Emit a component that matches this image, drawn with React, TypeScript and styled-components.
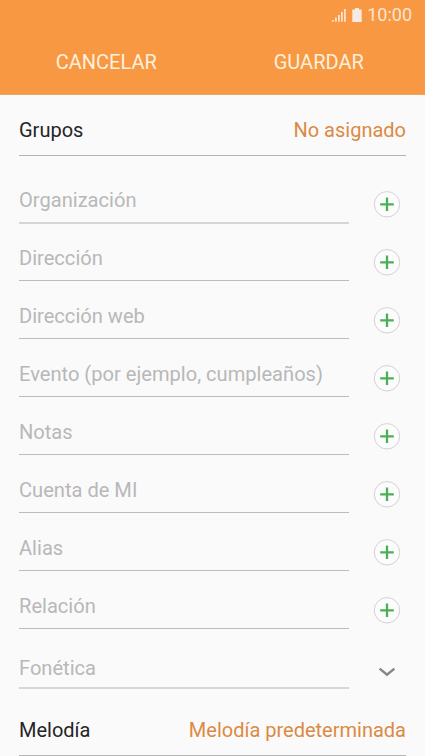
import React from "react";
import styled, { createGlobalStyle } from "styled-components";

const FIELDS = [
  { label: "Organización", soft: true },
  { label: "Dirección" },
  { label: "Dirección web" },
  { label: "Evento (por ejemplo, cumpleaños)" },
  { label: "Notas" },
  { label: "Cuenta de MI" },
  { label: "Alias" },
  { label: "Relación" },
];

const SignalIcon = () => (
  <svg width="15" height="14" viewBox="0 0 15 14" fill="#fbe3cc">
    <rect x="0" y="12" width="1.8" height="1.700" />
    <rect x="3" y="9.6" width="1.8" height="4.100" />
    <rect x="6" y="7" width="1.8" height="6.700" />
    <rect x="9" y="4" width="1.8" height="9.700" />
    <rect x="12" y="1" width="1.8" height="12.700" />
  </svg>
);

const BatteryIcon = () => (
  <svg width="10" height="14" viewBox="0 0 10 14" fill="#f6eae2">
    <path d="M3 0h4v1.6h2.2q.5 0 .5.5v11.4q0 .5-.5.5H.8q-.5 0-.5-.5V2.100q0-.5.5-.5H3z" />
  </svg>
);

const PlusIcon = () => (
  <svg width="28" height="28" viewBox="0 0.700 28 28" fill="none">
    <circle cx="14" cy="14" r="12.7" fill="#fcfcfc" stroke="#d2d2d2" />
    <path d="M14 7.200v13.600M7.200 14h13.600" stroke="#4caf57" strokeWidth="2.3" />
  </svg>
);

const ChevronIcon = () => (
  <svg width="28" height="28" viewBox="0 0 28 28" fill="none">
    <path d="M6.600 10.600l7.400 6 7.400-6" stroke="#858585" strokeWidth="2.4" />
  </svg>
);

export default function App() {
  return (
    <>
      <GlobalStyle />
      <Screen>
        <Header>
          <StatusBar>
            <SignalIcon />
            <BatteryIcon />
            <Clock>10:00</Clock>
          </StatusBar>
          <Actions>
            <ActionButton>CANCELAR</ActionButton>
            <ActionButton>GUARDAR</ActionButton>
          </Actions>
        </Header>
        <SettingRow $height={61}>
          <span>Grupos</span>
          <SettingValue>No asignado</SettingValue>
        </SettingRow>
        <FieldList>
          {FIELDS.map((item) => (
            <FieldRow key={item.label}>
              <Field $soft={item.soft}>{item.label}</Field>
              <IconButton aria-label="Añadir">
                <PlusIcon />
              </IconButton>
            </FieldRow>
          ))}
          <FieldRow $last>
            <Field $soft $last>
              Fonética
            </Field>
            <IconButton $last aria-label="Expandir">
              <ChevronIcon />
            </IconButton>
          </FieldRow>
        </FieldList>
        <SettingRow $height={67}>
          <span>Melodía</span>
          <SettingValue>Melodía predeterminada</SettingValue>
        </SettingRow>
      </Screen>
    </>
  );
}

const GlobalStyle = createGlobalStyle`
  * {
    box-sizing: border-box;
  }
  body {
    margin: 0;
    background: #fafafa;
    font-family: Roboto, sans-serif;
  }
  button {
    border: 0;
    padding: 0;
    background: none;
    font: inherit;
    cursor: pointer;
  }
  svg {
    display: block;
  }
`;

const Screen = styled.div`
  width: 425px;
  height: 756px;
  overflow: hidden;
  background: #fafafa;
  font-size: 20px;
  line-height: 24px;
`;

const Header = styled.header`
  height: 95px;
  background: #f89843;
  border-bottom: 1px solid #e3a76f;
`;

const StatusBar = styled.div`
  display: flex;
  align-items: center;
  justify-content: flex-end;
  gap: 5px;
  height: 29px;
  padding-right: 13px;
`;

const Clock = styled.span`
  color: #fbe5d2;
  font-size: 18px;
  line-height: 20px;
  padding-top: 1px;
`;

const Actions = styled.div`
  display: flex;
  height: 65px;
`;

const ActionButton = styled.button`
  flex: 1;
  height: 65px;
  color: #fdf0dc;
`;

const SettingRow = styled.div<{ $height: number }>`
  display: flex;
  align-items: flex-end;
  justify-content: space-between;
  height: ${({ $height }) => $height}px;
  margin: 0 19px;
  padding-bottom: 13px;
  border-bottom: 1px solid #b4b4b4;
  color: #252525;
`;

const SettingValue = styled.span`
  color: #db8a45;
`;

const FieldList = styled.div`
  padding-top: 10px;
`;

const FieldRow = styled.div<{ $last?: boolean }>`
  display: flex;
  align-items: flex-end;
  justify-content: space-between;
  height: ${({ $last }) => ($last ? 59 : 58)}px;
  padding: 0 24px 1px 19px;
`;

const Field = styled.div<{ $soft?: boolean; $last?: boolean }>`
  width: 330px;
  margin-bottom: ${({ $soft }) => ($soft ? -1 : 0)}px;
  padding-bottom: ${({ $last }) => ($last ? 7 : 10)}px;
  border-bottom: ${({ $soft }) => ($soft ? "2px solid #d6d6d6" : "1px solid #bcbcbc")};
  color: #b8b8b8;
  font-size: 20.1px;
`;

const IconButton = styled.button<{ $last?: boolean }>`
  width: 28px;
  height: 28px;
  margin-bottom: ${({ $last }) => ($last ? 2 : 4)}px;
`;
